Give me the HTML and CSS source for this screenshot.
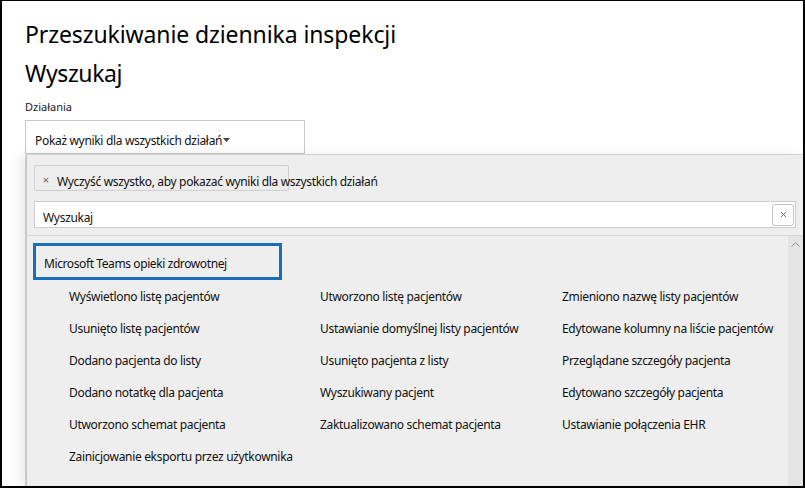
FILE: index.html
```html
<!DOCTYPE html>
<html lang="pl">
<head>
<meta charset="utf-8">
<link rel="stylesheet" href="styles.css">
</head>
<body>
<div class="frame">
  <div class="page">
    <h1 class="title">Przeszukiwanie dziennika inspekcji</h1>
    <h2 class="subtitle">Wyszukaj</h2>
    <div class="label">Działania</div>
    <div class="dropdown">
      <span class="dropdown-text">Pokaż wyniki dla wszystkich działań</span>
      <svg class="caret" width="7" height="4" viewBox="0 0 7 4"><polygon points="0,0 7,0 3.5,4" fill="#444"/></svg>
    </div>
    <div class="panel">
      <div class="panel-top">
        <div class="chip"><span class="chip-x">×</span><span class="chip-text">Wyczyść wszystko, aby pokazać wyniki dla wszystkich działań</span></div>
        <div class="search">
          <span class="search-text">Wyszukaj</span>
          <span class="clear">
            <svg width="7" height="7" viewBox="0 0 7 7"><path d="M0.8 0.8 L6.2 6.2 M6.2 0.8 L0.8 6.2" stroke="#666" stroke-width="0.9" fill="none"/></svg>
          </span>
        </div>
      </div>
      <div class="list-area">
        <div class="list">
          <div class="group"><span class="group-text">Microsoft Teams opieki zdrowotnej</span></div>
          <div class="items">
            <div class="item">Wyświetlono listę pacjentów</div>
            <div class="item">Utworzono listę pacjentów</div>
            <div class="item">Zmieniono nazwę listy pacjentów</div>
            <div class="item">Usunięto listę pacjentów</div>
            <div class="item">Ustawianie domyślnej listy pacjentów</div>
            <div class="item">Edytowane kolumny na liście pacjentów</div>
            <div class="item">Dodano pacjenta do listy</div>
            <div class="item">Usunięto pacjenta z listy</div>
            <div class="item">Przeglądane szczegóły pacjenta</div>
            <div class="item">Dodano notatkę dla pacjenta</div>
            <div class="item">Wyszukiwany pacjent</div>
            <div class="item">Edytowano szczegóły pacjenta</div>
            <div class="item">Utworzono schemat pacjenta</div>
            <div class="item">Zaktualizowano schemat pacjenta</div>
            <div class="item">Ustawianie połączenia EHR</div>
            <div class="item">Zainicjowanie eksportu przez użytkownika</div>
          </div>
        </div>
        <div class="scrollbar">
          <svg width="9" height="5" viewBox="0 0 9 5"><polyline points="0.5,4.5 4.5,0.8 8.5,4.5" fill="none" stroke="#8c8c8c" stroke-width="1"/></svg>
        </div>
      </div>
    </div>
  </div>
</div>
</body>
</html>
```
FILE: styles.css
```css
html, body {
  margin: 0;
  padding: 0;
  background: #ffffff;
}
.frame {
  width: 805px;
  height: 488px;
  box-sizing: border-box;
  border: 2px solid #000;
  border-top-width: 1px;
  overflow: hidden;
  background: #fff;
  font-family: "Noto Sans", "Open Sans", sans-serif;
  color: #111;
}
.page {
  padding-left: 23px;
  display: flex;
  flex-direction: column;
  height: 100%;
}
.title {
  margin: 17px 0 0 0;
  font-size: 23px;
  font-weight: 400;
  line-height: 32px;
  letter-spacing: -0.1px;
  color: #000;
}
.subtitle {
  margin: 7px 0 0 0;
  font-size: 23px;
  font-weight: 400;
  line-height: 32px;
  letter-spacing: -0.4px;
  color: #000;
}
.label {
  margin-top: 10px;
  font-size: 11px;
  line-height: 16px;
  color: #24192b;
}
.dropdown {
  margin-top: 5px;
  width: 280px;
  height: 34px;
  box-sizing: border-box;
  border: 1px solid #c8c8c8;
  padding-left: 9px;
  display: flex;
  align-items: center;
  font-size: 12px;
  letter-spacing: -0.32px;
  color: #111;
}
.dropdown-text {
  padding-top: 7px;
}
.caret {
  margin-top: 6px;
  margin-left: 1px;
  flex-shrink: 0;
}
.panel {
  flex: 1;
  background: #eeeeee;
  border-top: 1px solid #d3d3d3;
  border-left: 2px solid #c9c9c9;
  border-top-left-radius: 3px;
  box-shadow: -6px 0 12px rgba(0,0,0,0.07);
  display: flex;
  flex-direction: column;
  min-height: 0;
}
.panel-top {
  padding: 10px 7px 7px 7px;
  border-bottom: 1px solid #d6d6d6;
}
.chip {
  width: 255px;
  height: 26px;
  box-sizing: border-box;
  border: 1px solid #d0d0d0;
  border-radius: 2px;
  background: #ededed;
  display: flex;
  align-items: center;
  white-space: nowrap;
  font-size: 12px;
  letter-spacing: -0.34px;
  color: #111;
}
.chip-x {
  flex-shrink: 0;
  width: 22px;
  text-align: center;
  font-size: 11px;
  letter-spacing: 0;
  color: #666;
  padding-top: 2px;
}
.chip-text {
  padding-top: 7px;
}
.search {
  margin-top: 10px;
  height: 27px;
  box-sizing: border-box;
  border: 1px solid #cdcdcd;
  background: #fff;
  display: flex;
  align-items: center;
  justify-content: space-between;
  padding-left: 8px;
  padding-right: 1px;
  font-size: 12px;
  letter-spacing: -0.3px;
  color: #111;
}
.search-text {
  padding-top: 5px;
}
.clear {
  width: 22px;
  height: 22px;
  box-sizing: border-box;
  border: 1px solid #c4c4c4;
  border-radius: 3px;
  display: flex;
  align-items: center;
  justify-content: center;
}
.list-area {
  flex: 1;
  display: flex;
  min-height: 0;
}
.list {
  flex: 1;
  padding: 7px 0 0 6px;
}
.group {
  width: 249px;
  height: 37px;
  box-sizing: border-box;
  border: 3px solid #1a6dbb;
  padding-left: 8px;
  display: flex;
  align-items: center;
  font-size: 12px;
  letter-spacing: -0.4px;
  color: #111;
}
.group-text {
  padding-top: 4px;
}
.items {
  display: grid;
  grid-template-columns: 251px 242px 1fr;
  padding-left: 36px;
  grid-auto-rows: 32px;
}
.item {
  display: flex;
  align-items: center;
  font-size: 12px;
  letter-spacing: -0.32px;
  color: #111;
  white-space: nowrap;
}
.scrollbar {
  width: 15px;
  flex-shrink: 0;
  background: #e4e4e4;
  display: flex;
  justify-content: center;
  align-items: flex-start;
  padding-top: 6px;
  box-sizing: border-box;
}
```
